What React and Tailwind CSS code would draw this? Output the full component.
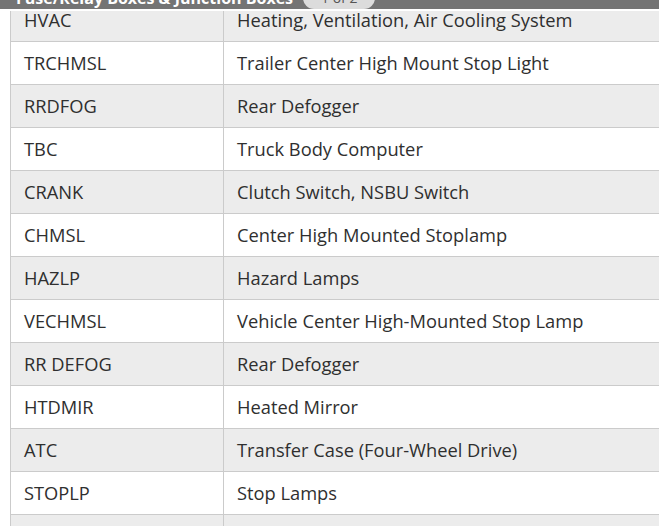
import React from "react";

const rows = [
  ["HVAC", "Heating, Ventilation, Air Cooling System"],
  ["TRCHMSL", "Trailer Center High Mount Stop Light"],
  ["RRDFOG", "Rear Defogger"],
  ["TBC", "Truck Body Computer"],
  ["CRANK", "Clutch Switch, NSBU Switch"],
  ["CHMSL", "Center High Mounted Stoplamp"],
  ["HAZLP", "Hazard Lamps"],
  ["VECHMSL", "Vehicle Center High-Mounted Stop Lamp"],
  ["RR DEFOG", "Rear Defogger"],
  ["HTDMIR", "Heated Mirror"],
  ["ATC", "Transfer Case (Four-Wheel Drive)"],
  ["STOPLP", "Stop Lamps"],
  ["", ""],
];

export default function App() {
  return (
    <div
      className="relative w-[659px] h-[526px] overflow-hidden bg-white text-[#2f2f2f]"
      style={{ fontFamily: '"Open Sans", "Liberation Sans", sans-serif' }}
    >
      {/* sticky section header, scrolled mostly out of view */}
      <div className="absolute top-0 left-0 right-0 z-10 h-[11px] bg-[#747474] border-b-2 border-white overflow-hidden">
        <div className="flex items-center gap-[10px] pl-4 -mt-[14px] h-[24px]">
          <span className="text-white font-bold text-[16px] whitespace-nowrap">
            Fuse/Relay Boxes &amp; Junction Boxes
          </span>
          <span className="rounded-full bg-[#dcdcdc] text-[#555] text-[14px] px-[18px] leading-[22px] whitespace-nowrap">
            1 of 2
          </span>
        </div>
      </div>

      <div className="pl-[10px] -mt-[2px]">
        <table className="w-[720px] border-collapse text-[18.3px]">
          <tbody>
            {rows.map(([code, desc], i) => (
              <tr key={i} className={i % 2 === 0 ? "bg-[#ececec]" : "bg-white"}>
                <td className="w-[213px] h-[43px] border border-[#cbcbcb] px-[13px] align-middle whitespace-nowrap">
                  {code}
                </td>
                <td className="h-[43px] border border-[#cbcbcb] px-[13px] align-middle whitespace-nowrap">
                  {desc}
                </td>
              </tr>
            ))}
          </tbody>
        </table>
      </div>
    </div>
  );
}
